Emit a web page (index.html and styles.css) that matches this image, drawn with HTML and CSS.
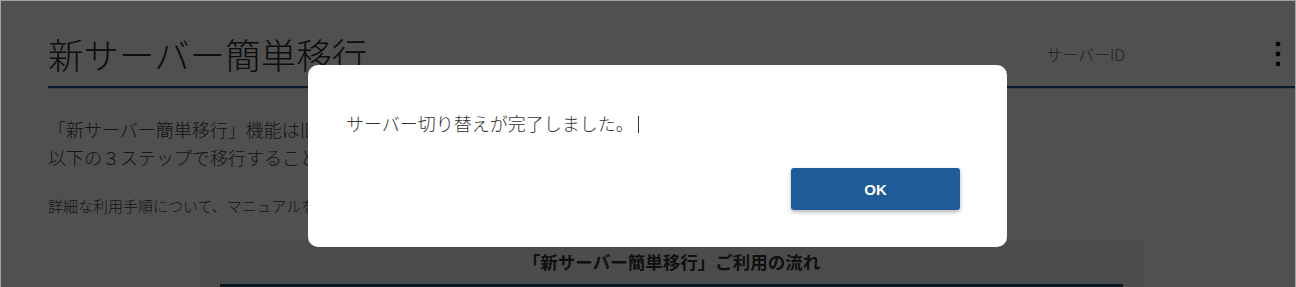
FILE: index.html
```html
<!DOCTYPE html>
<html lang="ja">
<head>
    <meta charset="UTF-8">
    <meta name="viewport" content="width=device-width, initial-scale=1.0">
    <title>新サーバー簡単移行</title>
    <link rel="stylesheet" href="styles.css">
</head>
<body>
    <div class="page">
        <div class="header">
            <h1 class="title">新サーバー簡単移行</h1>
            <span class="server-id">サーバーID</span>
            <button class="menu" aria-label="メニュー">
                <svg width="6" height="26" viewBox="0 0 6 26">
                    <circle cx="3" cy="3" r="2.4" fill="#111"/>
                    <circle cx="3" cy="13" r="2.4" fill="#111"/>
                    <circle cx="3" cy="23" r="2.4" fill="#111"/>
                </svg>
            </button>
        </div>
        <p class="lead">「新サーバー簡単移行」機能は旧サーバーから新サーバーへ簡単に移行できる機能です。<br>以下の３ステップで移行することができます。</p>
        <p class="note">詳細な利用手順について、マニュアルをご確認ください。</p>
        <div class="flow">
            <div class="flow-title">「新サーバー簡単移行」ご利用の流れ</div>
            <div class="flow-bar"></div>
        </div>
    </div>

    <div class="overlay"></div>
    <div class="dialog">
        <p class="dialog-message">サーバー切り替えが完了しました。<span class="caret"></span></p>
        <div class="dialog-actions">
            <button class="ok">OK</button>
        </div>
    </div>
</body>
</html>
```

FILE: styles.css
```css
html, body {
    height: 100%;
}

body {
    margin: 0;
    background-color: white;
    border: 1px solid #a3a3a3;
    border-bottom: none;
    box-sizing: border-box;
    overflow: hidden;
    font-family: "Noto Sans CJK JP", "Noto Sans", sans-serif;
}

.page {
    padding-left: 47px;
}

.header {
    display: flex;
    align-items: center;
    padding-top: 32px;
    padding-bottom: 11px;
    border-bottom: 2px solid #1f4e8c;
    box-shadow: 0 1px 0 #d5dbe4;
}

.title {
    flex: 1;
    margin: 0;
    font-size: 35.5px;
    font-weight: 300;
    line-height: 42px;
    color: #2a2a2a;
}

.server-id {
    font-size: 16px;
    font-weight: 300;
    color: #666;
    margin-right: 150px;
}

.menu {
    display: flex;
    border: none;
    background: none;
    padding: 0;
    margin-right: 14px;
    cursor: pointer;
}

.lead {
    margin: 27px 0 0;
    font-size: 18px;
    font-weight: 300;
    line-height: 28px;
    color: #444;
}

.note {
    margin: 24px 0 0;
    font-size: 15px;
    font-weight: 300;
    line-height: 22px;
    color: #444;
}

.flow {
    width: 943px;
    margin: 24px auto 0;
    padding: 8px 20px 0;
    box-sizing: border-box;
    background-color: #f1f2f3;
}

.flow-title {
    text-align: center;
    font-size: 17.5px;
    font-weight: bold;
    line-height: 26px;
    color: #333;
}

.flow-bar {
    margin-top: 9px;
    height: 40px;
    background-color: #1e4d6e;
}

.overlay {
    position: fixed;
    top: 1px;
    left: 1px;
    right: 1px;
    bottom: 0;
    background-color: rgba(0, 0, 0, 0.685);
}

.dialog {
    position: fixed;
    top: 65px;
    left: 308px;
    width: 699px;
    height: 182px;
    box-sizing: border-box;
    padding: 45px 47px 37px 38px;
    background-color: white;
    border-radius: 10px;
    display: flex;
    flex-direction: column;
}

.dialog-message {
    margin: 0;
    font-size: 18px;
    font-weight: 300;
    line-height: 26px;
    color: #333;
}

.caret {
    display: inline-block;
    width: 1px;
    height: 17px;
    margin-left: 4px;
    background-color: #333;
    vertical-align: -2px;
}

.dialog-actions {
    margin-top: auto;
    display: flex;
    justify-content: flex-end;
}

.ok {
    width: 169px;
    height: 42px;
    border: none;
    border-radius: 3px;
    background-color: #1f5b98;
    color: white;
    font-family: "Liberation Sans", Arial, sans-serif;
    font-size: 15px;
    font-weight: bold;
    box-shadow: 0 2px 4px rgba(0, 0, 0, 0.3);
    cursor: pointer;
}
```
